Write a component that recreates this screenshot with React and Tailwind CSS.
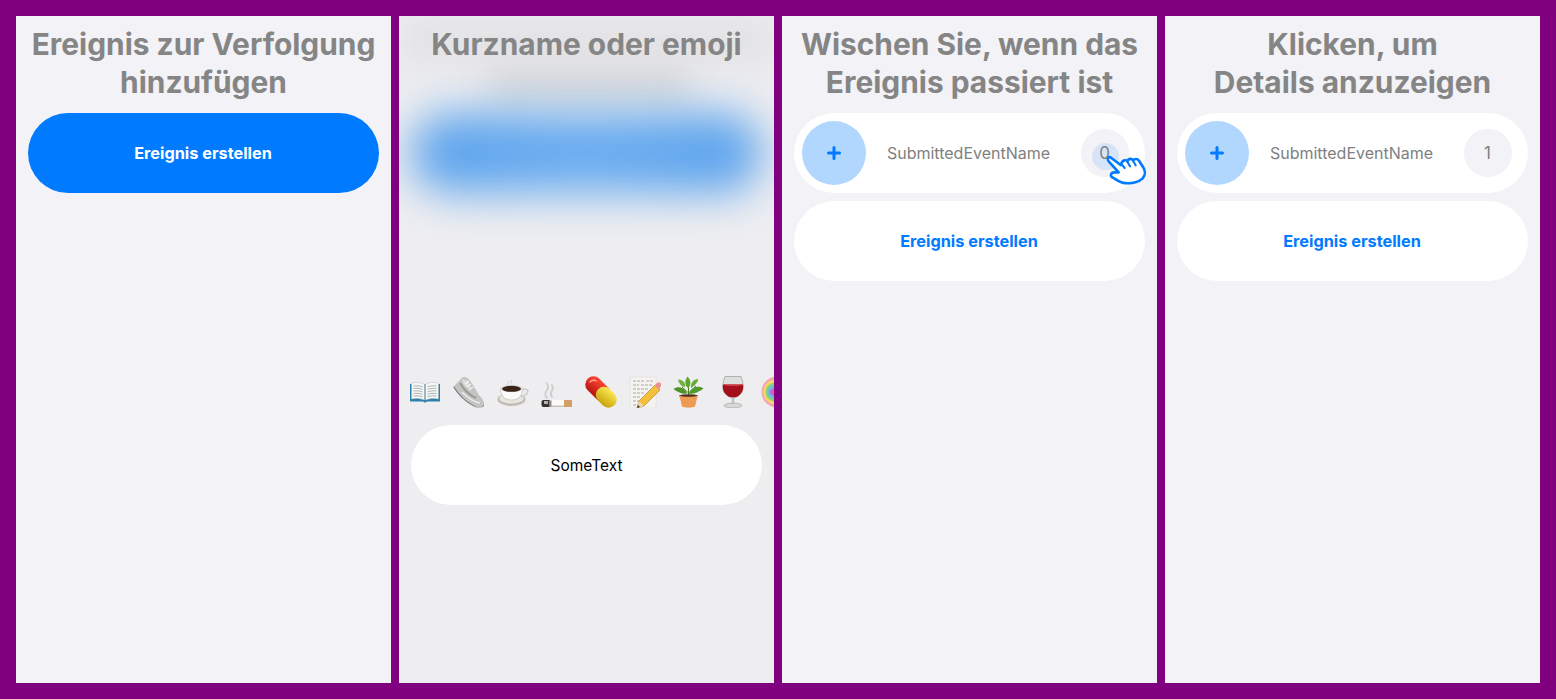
const FONT = "font-['Inter','Liberation_Sans',sans-serif]";

function Title({ children }) {
  return (
    <h1 className="h-[76px] px-[12px] text-center text-[29.9px] leading-[38px] font-bold text-[#858585]">
      {children}
    </h1>
  );
}

function Panel({ children, className = "bg-[#f2f2f7]" }) {
  return <section className={`relative w-[375px] h-[667px] shrink-0 overflow-hidden pt-[9px] ${className}`}>{children}</section>;
}

function CreateButton({ primary }) {
  return (
    <button
      className={`mx-[12px] flex h-[80px] w-[351px] items-center justify-center rounded-[40px] pr-[1px] text-[16.3px] font-bold ${
        primary ? "bg-[#007aff] text-white" : "bg-white text-[#007aff]"
      }`}
    >
      Ereignis erstellen
    </button>
  );
}

function Plus() {
  return (
    <svg width="14" height="14" viewBox="0 0 14 14">
      <path d="M7 1.5v11M1.5 7h11" stroke="#007aff" strokeWidth="3" strokeLinecap="round" />
    </svg>
  );
}

function Hand() {
  return (
    <svg className="absolute left-[19px] top-[6px]" width="50" height="55" viewBox="0 0 150 165">
      <path
        d="M30 66 C24 66 21 74 26 79 L56 112 L43 112 C34 112 30 120 35 126 C52 134 62 146 78 144 C96 147 118 140 128 130 C137 120 136 106 129 96 L117 77 C112 70 104 71 99 76 C94 69 86 71 82 78 C77 74 69 75 65 83 L62 90 Z"
        fill="#ffffff"
        stroke="#007aff"
        strokeWidth="8"
        strokeLinejoin="round"
        strokeLinecap="round"
      />
      <path d="M65 88 L74 99 M82 80 L90 94 M99 77 L107 91" fill="none" stroke="#007aff" strokeWidth="6.500" strokeLinecap="round" />
    </svg>
  );
}

function EventRow({ count, pointer }) {
  return (
    <div className="mx-[12px] mb-[8px] flex h-[80px] w-[351px] items-center rounded-[40px] bg-white pl-[8px] pr-[16px]">
      <div className="flex h-[64px] w-[64px] shrink-0 items-center justify-center rounded-full bg-[#b2d7ff]">
        <Plus />
      </div>
      <span className="mr-[10px] flex-1 text-center text-[16px] text-[#808080]">SubmittedEventName</span>
      <div className="relative flex h-[48px] w-[48px] shrink-0 items-center justify-center rounded-full bg-[#f2f2f7] pr-[1px] pt-[1px] text-[17px] text-[#808080]">
        {pointer && <span className="absolute left-[11px] top-[14px] h-[27px] w-[27px] rounded-full bg-[#d5e4f7]" />}
        <span className="relative">{count}</span>
        {pointer && <Hand />}
      </div>
    </div>
  );
}

const Book = () => (
  <svg width="32" height="32" viewBox="0 0 32 32">
    <path d="M1 8h30v17.500H18l-2 1.200-2-1.200H1z" fill="#2f7fae" />
    <path d="M2.500 7c4-1 9-1 13 1.200V24c-4-1.800-9-2-13-1z" fill="#f6f6f2" stroke="#9fb4c0" strokeWidth=".4" />
    <path d="M29.500 7c-4-1-9-1-13 1.200V24c4-1.800 9-2 13-1z" fill="#f6f6f2" stroke="#9fb4c0" strokeWidth=".4" />
    <path d="M4.500 10c3-.4 6-.2 9 .8M4.500 12.500c3-.4 6-.2 9 .8M4.500 15c3-.4 6-.2 9 .8M4.500 17.500c3-.4 6-.2 9 .8M4.500 20c3-.4 6-.2 9 .8M27.500 10c-3-.4-6-.2-9 .8M27.500 12.500c-3-.4-6-.2-9 .8M27.500 15c-3-.4-6-.2-9 .8M27.500 17.500c-3-.4-6-.2-9 .8M27.500 20c-3-.4-6-.2-9 .8" stroke="#8c99a3" strokeWidth=".7" fill="none" />
  </svg>
);

const Shoe = () => (
  <svg width="32" height="32" viewBox="0 0 32 32">
    <path d="M1 10 L6 5 C8 3 9 1 11 1 C14 1 16 3 18 6 C21 10 23 15 26 19 C29 22 31 25 31 28 C30 31 27 32 24 31 C15 27 6 19 1 10Z" fill="#c3c3c1" />
    <path d="M1 10 C6 19 15 27 24 31 C27 32 30 31 31 28 L31 30 C28 32.500 24 32 20 30 C12 26 5 19 0.500 11.500Z" fill="#77777a" />
    <path d="M9 3 C9 8 13 12 18 13 L15 5Z" fill="#dededc" />
    <path d="M7 7 C11 14 16 19 23 22" stroke="#9a9a98" strokeWidth="2" fill="none" />
    <path d="M16 5 L12 8 M18 8 L14 11 M20 11 L16 14" stroke="#f3f3f1" strokeWidth="1.300" />
    <path d="M9 16 C14 21 20 26 27 27" stroke="#ecece9" strokeWidth="1.600" fill="none" />
  </svg>
);

const Coffee = () => (
  <svg width="32" height="32" viewBox="0 0 32 32">
    <path d="M11 9c-1.500-1.500 1.500-2.500 0-4 M14 8c-1-1.500 1.500-2.500.5-4" stroke="#d6d6d6" strokeWidth="1.200" fill="none" />
    <ellipse cx="14.500" cy="23.500" rx="14" ry="6.500" fill="#bfbdb5" />
    <ellipse cx="14.500" cy="22.500" rx="12" ry="5" fill="#e7e6e0" />
    <path d="M3.500 12c0 7 3 12 11 12s11-5 11-12z" fill="#fbfbf9" stroke="#a9a9a5" strokeWidth=".5" />
    <ellipse cx="14.500" cy="12.500" rx="11" ry="3.800" fill="#e0e0de" />
    <ellipse cx="14.500" cy="12.800" rx="9.500" ry="3" fill="#3a2418" />
    <path d="M25 14c4-2 6.500 0 5.500 2.500-1 2.500-4 3.500-7 4" stroke="#cfcfcb" strokeWidth="1.800" fill="none" />
  </svg>
);

const Cigarette = () => (
  <svg width="32" height="32" viewBox="0 0 32 32">
    <path d="M6 22c-3-3.500-2-5.500 0-8s1-5-.5-7M11 21c-2-3-1.500-4.500 0-6.500s.8-4-.2-5.500" stroke="#cfcfcf" strokeWidth="2" fill="none" strokeLinecap="round" />
    <rect x="8" y="24" width="16" height="7" fill="#fbfaf7" />
    <rect x="8" y="29.500" width="16" height="1.500" fill="#c6c4be" />
    <rect x="23" y="24" width="8" height="7" fill="#d39f68" />
    <rect x="0.500" y="24" width="9" height="7" rx="2" fill="#33302d" />
    <rect x="3" y="25" width="4" height="3" fill="#b5b1ac" />
    <rect x="8" y="24.500" width="2.500" height="6" fill="#8d8a85" />
  </svg>
);

const Pill = () => (
  <svg width="32" height="32" viewBox="0 0 32 32">
    <defs>
      <linearGradient id="pr" gradientUnits="userSpaceOnUse" x1="12" y1="4" x2="4" y2="16"><stop offset="0" stopColor="#f5402f" /><stop offset="1" stopColor="#b8160f" /></linearGradient>
      <linearGradient id="py" gradientUnits="userSpaceOnUse" x1="26" y1="12" x2="14" y2="28"><stop offset="0" stopColor="#fff05a" /><stop offset="1" stopColor="#c79c05" /></linearGradient>
    </defs>
    <line x1="8.500" y1="8.500" x2="18" y2="18" stroke="url(#pr)" strokeWidth="16.500" strokeLinecap="round" />
    <line x1="19" y1="19" x2="23.500" y2="23.500" stroke="url(#py)" strokeWidth="16.500" strokeLinecap="round" />
    <path d="M5 6c2-2 4-2.500 6-1" stroke="#ff9a8c" strokeWidth="1.500" fill="none" strokeLinecap="round" />
  </svg>
);

const Memo = () => (
  <svg width="32" height="32" viewBox="0 0 32 32">
    <rect x="1" y="1" width="26" height="31" fill="#f4f3ef" stroke="#d9d8d4" strokeWidth=".5" />
    <path d="M4 5h11M17 5h7M4 9h6M12 9h12M4 13h15M4 17h11M4 21h7M4 25h6M4 29h8" stroke="#8a8a8a" strokeWidth=".7" strokeDasharray="3 1" />
    <path d="M10 25 26 9l5 5-16 16-7 2z" fill="#f4bf3a" stroke="#a87a1c" strokeWidth=".6" />
    <path d="M26 9 28 7c1-1 2.500-1 3.500 0s1 2.500 0 3.500L30 14z" fill="#ec8e93" />
    <path d="M10 25l5 5-7 2z" fill="#edd6ae" />
    <path d="M8 32l1-3 2 2z" fill="#333" />
  </svg>
);

const Plant = () => (
  <svg width="32" height="32" viewBox="0 0 32 32">
    <path d="M15.500 19V9M15.500 17 9 11M15.500 17 23 10" stroke="#4d7c22" strokeWidth="1" fill="none" />
    <path d="M15 12C11 9 12 4 14.500 0.500 18 4 18.500 9 15 12z" fill="#5da52f" />
    <path d="M14 18C8 18 3 15 0.500 13 4.500 9.500 12 11 14 18z" fill="#4b9526" />
    <path d="M16 18c6 0 11-3 14.500-5.500C26 9 18 11 16 18z" fill="#4f9a2a" />
    <path d="M12 11C9 11 6 8 5 3.500 9.500 3.500 13 6.500 12 11z" fill="#6fb23b" />
    <path d="M18 12C21 10 25 7 25 3 21 3 17 7 18 12z" fill="#67ad35" />
    <path d="M6 19h19l-.8 2h-17.400z" fill="#c76a2c" />
    <path d="M6.500 20h18l-2.500 10.500c-3 1.500-10 1.500-13 0z" fill="#ef9a54" />
    <ellipse cx="15.500" cy="19.500" rx="8.500" ry="1.300" fill="#4c3324" />
  </svg>
);

const Wine = () => (
  <svg width="32" height="32" viewBox="0 0 32 32">
    <path d="M8 0.500h16c2.500 6 3.500 13-.5 17.500-2 2.500-4.500 3.500-7.500 3.500s-5.500-1-7.500-3.500C4.500 13.500 5.500 6.500 8 0.500z" fill="#dcdfde" stroke="#8e908f" strokeWidth=".6" />
    <path d="M6 8.500h20c.6 3.700 0 7-2.500 9.500-2 2.500-4.500 3.500-7.500 3.500s-5.500-1-7.500-3.500C6 15.500 5.400 12.200 6 8.500z" fill="#a3101c" />
    <path d="M6.300 8.500h19.400c-3 2-16.400 2-19.400 0z" fill="#d63a40" />
    <path d="M14.600 21.500h2.800v6.500h-2.800z" fill="#c3c5c3" />
    <ellipse cx="16" cy="29.500" rx="9" ry="2.300" fill="#d7d9d7" stroke="#9c9e9d" strokeWidth=".6" />
  </svg>
);

const Lollipop = () => (
  <svg width="32" height="32" viewBox="0 0 32 32">
    <circle cx="16" cy="16" r="15.500" fill="#f3a9b4" />
    <circle cx="15" cy="16" r="12.500" fill="#f7d768" />
    <circle cx="14" cy="16" r="9.500" fill="#8ed07c" />
    <circle cx="13" cy="16" r="6.500" fill="#63bce8" />
    <circle cx="12.500" cy="16" r="3.500" fill="#d35fc4" />
  </svg>
);

export default function App() {
  return (
    <main className={`flex h-[699px] w-[1556px] gap-[8px] overflow-hidden bg-[#800080] p-[16px] ${FONT}`}>
      <Panel>
        <Title>Ereignis zur Verfolgung hinzufügen</Title>
        <div className="mt-[12px]">
          <CreateButton primary />
        </div>
      </Panel>

      <Panel className="bg-[#eeeef1]">
        <div className="absolute left-0 top-0 h-[50px] w-full bg-[#e3e3e6] blur-[16px]" />
        <div className="absolute left-[90px] top-[52px] h-[36px] w-[200px] bg-[#d6d7da] blur-[16px]" />
        <div className="relative">
          <Title>Kurzname oder emoji</Title>
        </div>
        <div className="relative mx-[12px] mt-[12px] h-[80px] w-[351px] rounded-[40px] bg-linear-to-r from-[#5aa2ec] via-[#6aacf0] to-[#5aa2ec] blur-[22px]" />
        <div className="relative mt-[183px] flex h-[32px] gap-[12px] pl-[10px]">
          <span className="shrink-0 blur-[0.4px]"><Book /></span>
          <span className="shrink-0 blur-[0.4px]"><Shoe /></span>
          <span className="shrink-0 blur-[0.4px]"><Coffee /></span>
          <span className="shrink-0 blur-[0.4px]"><Cigarette /></span>
          <span className="shrink-0 blur-[0.4px]"><Pill /></span>
          <span className="shrink-0 blur-[0.4px]"><Memo /></span>
          <span className="shrink-0 blur-[0.4px]"><Plant /></span>
          <span className="shrink-0 blur-[0.4px]"><Wine /></span>
          <span className="shrink-0 blur-[0.4px]"><Lollipop /></span>
        </div>
        <div className="relative mx-[12px] mt-[17px] flex h-[80px] w-[351px] items-center justify-center rounded-[40px] bg-white pt-[1px] text-[15.5px] text-black">
          SomeText
        </div>
      </Panel>

      <Panel>
        <Title>Wischen Sie, wenn das Ereignis passiert ist</Title>
        <div className="mt-[12px]">
          <EventRow count="0" pointer />
          <CreateButton />
        </div>
      </Panel>

      <Panel>
        <Title>Klicken, um<br />Details anzuzeigen</Title>
        <div className="mt-[12px]">
          <EventRow count="1" />
          <CreateButton />
        </div>
      </Panel>
    </main>
  );
}
